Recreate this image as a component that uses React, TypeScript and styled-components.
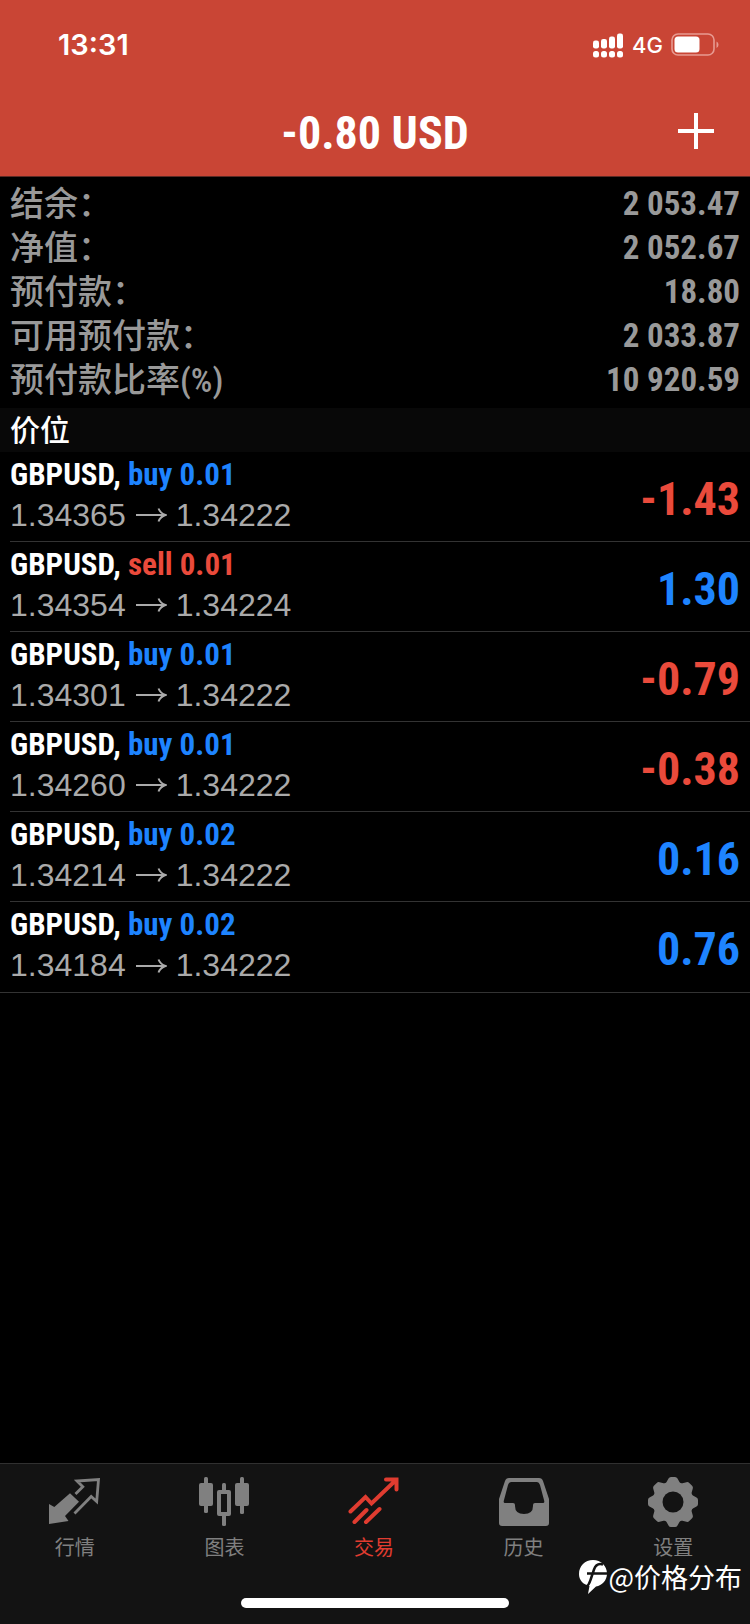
import React from 'react';
import styled, { createGlobalStyle } from 'styled-components';

const RED = '#ea4a3b';
const BLUE = '#1e84ff';
const sans = `"Liberation Sans", "Noto Sans CJK SC", sans-serif`;
const narrow = `"Roboto Condensed", "Noto Sans CJK SC", sans-serif`;

const GlobalStyle = createGlobalStyle`
  * { box-sizing: border-box; }
  body { margin: 0; background: #000; font-family: ${sans}; }
  h1, h2, p, dl, dt, dd, ul { margin: 0; padding: 0; }
  ul { list-style: none; }
`;

const Screen = styled.div`
  display: flex;
  flex-direction: column;
  min-height: 100vh;
  background: #000;
  color: #fff;
`;

const Header = styled.header`
  background: #c94535;
  border-bottom: 1px solid #5c2a24;
`;

const StatusBar = styled.div`
  display: flex;
  align-items: center;
  justify-content: space-between;
  height: 90px;
  padding: 0 31px 0 58px;
`;

const Clock = styled.time`
  font: 600 29px/32px Inter, sans-serif;
`;

const StatusIcons = styled.div`
  display: flex;
  align-items: center;
  gap: 8px;
`;

const Network = styled.span`
  font: 500 22px/28px Inter, sans-serif;
`;

const TitleBar = styled.div`
  display: grid;
  grid-template-columns: 1fr auto 1fr;
  align-items: center;
  height: 86px;
  padding: 0 24px 4px;
`;

const Title = styled.h1`
  grid-column: 2;
  padding-top: 4px;
  font: 700 46px/56px ${narrow};
`;

const AddButton = styled.button`
  display: grid;
  place-items: center;
  justify-self: end;
  width: 60px;
  height: 60px;
  padding: 0;
  border: 0;
  background: none;
  color: #fff;
`;

const Summary = styled.dl`
  padding: 5px 10px 6px;
  color: #999;
`;

const SummaryRow = styled.div`
  display: flex;
  align-items: center;
  justify-content: space-between;
  height: 44px;
`;

const SummaryLabel = styled.dt`
  font: 500 34px/44px ${narrow};
`;

const SummaryValue = styled.dd`
  font: 700 33px/44px ${narrow};
`;

const SectionTitle = styled.h2`
  height: 44px;
  padding: 0 10px;
  background: #080808;
  font: 500 30px/46px ${narrow};
`;

const PositionRow = styled.li`
  display: flex;
  align-items: center;
  justify-content: space-between;
  height: 90px;
  margin-left: 10px;
  padding-right: 10px;
  border-bottom: 1px solid #333;

  &:last-child {
    height: 91px;
    margin-left: 0;
    padding-left: 10px;
  }
`;

const OrderInfo = styled.div`
  padding-bottom: 3px;
`;

const Order = styled.p`
  font: 700 31px/40px ${narrow};
`;

const Side = styled.span<{ $color: string }>`
  color: ${(p) => p.$color};
`;

const Prices = styled.p`
  display: flex;
  align-items: center;
  gap: 9px;
  color: #aaa;
  font: 400 32px/41px ${sans};
`;

const Profit = styled.strong<{ $color: string }>`
  padding-top: 4px;
  color: ${(p) => p.$color};
  font: 700 46px/56px ${narrow};
`;

const Footer = styled.footer`
  position: relative;
  margin-top: auto;
  height: 161px;
  border-top: 1px solid #303030;
  background: #131313;
`;

const Tabs = styled.nav`
  display: grid;
  grid-template-columns: repeat(5, 1fr);
  padding-right: 2px;
`;

const Tab = styled.a<{ $active?: boolean }>`
  display: flex;
  flex-direction: column;
  align-items: center;
  gap: 3px;
  padding-top: 12px;
  color: ${(p) => (p.$active ? '#e03c30' : '#808080')};
  font: 400 20px/32px "Noto Sans CJK SC", sans-serif;
  text-decoration: none;
`;

const HomeIndicator = styled.div`
  position: absolute;
  bottom: 16px;
  left: 50%;
  width: 268px;
  height: 10px;
  border-radius: 5px;
  background: #fff;
  transform: translateX(-50%);
`;

const Watermark = styled.div`
  position: absolute;
  right: 8px;
  bottom: 27px;
  display: flex;
  align-items: center;
  font: 400 27px/40px "Noto Sans CJK SC", sans-serif;
`;

const Signal = () => (
  <svg width="31" height="25" viewBox="0 0 31 25" fill="#fff" aria-hidden="true">
    {[0, 1, 2, 3].map((i) => (
      <g key={i}>
        <rect x={i * 8} y={[7.5, 6, 3.5, 0.5][i]} width="6" height={[8, 9.5, 12, 15][i]} rx="2.2" />
        <rect x={i * 8} y="18" width="6" height="6.5" rx="2.5" />
      </g>
    ))}
  </svg>
);

const Battery = () => (
  <svg width="48" height="24" viewBox="0 0 48 24" fill="none" aria-hidden="true">
    <rect x="1" y="1" width="42" height="21" rx="6" stroke="#e79a91" strokeWidth="1.6" />
    <rect x="3.5" y="3.5" width="25" height="16" rx="3.5" fill="#fff" />
    <path d="M45.5 8.5v6.5q2-1 2-3.2t-2-3.3z" fill="#e79a91" />
  </svg>
);

const Plus = () => (
  <svg width="36" height="36" viewBox="0 0 36 36" stroke="#fff" strokeWidth="4" aria-hidden="true">
    <path d="M0 18h36M18 0v36" />
  </svg>
);

const Arrow = () => (
  <svg width="32" height="16" viewBox="0 0 32 16" fill="none" stroke="#aaa" strokeWidth="2" role="img" aria-label="to">
    <path d="M1 8h29M23.500 1.500q2 5 7 6.500q-5 1.500-7 6.500" />
  </svg>
);

const QuotesIcon = () => (
  <svg width="52" height="52" viewBox="0 0 52 52" aria-hidden="true">
    <path d="M0 28l5.300 3L21 17.300l9 8.500L16 40l3.500 5L0 48z" fill="currentColor" />
    <path d="M26.500 18l7.300-7.300L28 5l21.500-1.500L47.700 25.500l-5.500-5L25.500 37.500" fill="none" stroke="currentColor" strokeWidth="2.800" />
  </svg>
);

const ChartIcon = () => (
  <svg width="52" height="52" viewBox="0 0 52 52" fill="currentColor" aria-hidden="true">
    <rect x="6" y="1" width="4" height="36" rx="1.500" />
    <rect x="1" y="7" width="14" height="23" rx="2" />
    <rect x="42" y="1" width="4" height="37" rx="1.500" />
    <rect x="37" y="7" width="14" height="23" rx="2" />
    <rect x="24" y="7" width="4" height="8" rx="1.500" />
    <rect x="24" y="38" width="4" height="12" rx="1.500" />
    <path fillRule="evenodd" d="M21 14h10q2 0 2 2v22q0 2-2 2H21q-2 0-2-2V16q0-2 2-2zm2 4v18h6V18z" />
  </svg>
);

const TradeIcon = () => (
  <svg width="52" height="52" viewBox="0 0 52 52" fill="none" stroke="currentColor" strokeWidth="4" strokeLinecap="round" aria-hidden="true">
    <path d="M2.500 35.500L17.500 21l6 6.500L48 4M38 3.500h10.500v10M6.500 46L18.500 34M18 46L31.500 33" />
  </svg>
);

const HistoryIcon = () => (
  <svg width="52" height="52" viewBox="0 0 52 52" fill="currentColor" aria-hidden="true">
    <path fillRule="evenodd" d="M11 2h30q3 0 4 3l6 18v24q0 3-3 3H4q-3 0-3-3V23L7 5q1-3 4-3zm2 4q-2 0-3 3L6 24q-1 3 1 3h8q2 0 2 2v1q0 8 9 8t9-8v-1q0-2 2-2h8q2 0 1-3L42 9q-1-3-3-3z" />
  </svg>
);

const SettingsIcon = () => (
  <svg width="52" height="52" viewBox="0 0 52 52" aria-hidden="true">
    <g fill="currentColor">
      {[0, 45, 90, 135].map((a) => (
        <path key={a} transform={`rotate(${a} 26 26)`} d="M19 7l2.500-4.500q.8-1.500 2.500-1.500h4q1.700 0 2.500 1.500L33 7v38l-2.500 4.500q-.8 1.500-2.500 1.500h-4q-1.700 0-2.500-1.500L19 45z" />
      ))}
      <circle cx="26" cy="26" r="20.500" />
    </g>
    <circle cx="26" cy="26" r="10.500" fill="#131313" />
  </svg>
);

const BrandMark = () => (
  <svg width="29" height="34" viewBox="0 0 29 34" aria-hidden="true">
    <path d="M14 0C22 0 28 6 28 13.500c0 7-5 12-11 13L9 34l1.500-8C4 24.500 0 20 0 14 0 6 6 0 14 0z" fill="#fff" />
    <path d="M24 4.500q-6.500-2-9 5L11.500 20q-1.500 5-4.500 7M8 13.500h20" fill="none" stroke="#131313" strokeWidth="2.500" />
  </svg>
);

const summary = [
  ['结余：', '2 053.47'],
  ['净值：', '2 052.67'],
  ['预付款：', '18.80'],
  ['可用预付款：', '2 033.87'],
  ['预付款比率(%)', '10 920.59'],
];

const positions = [
  { side: 'buy', lots: '0.01', open: '1.34365', now: '1.34222', profit: '-1.43' },
  { side: 'sell', lots: '0.01', open: '1.34354', now: '1.34224', profit: '1.30' },
  { side: 'buy', lots: '0.01', open: '1.34301', now: '1.34222', profit: '-0.79' },
  { side: 'buy', lots: '0.01', open: '1.34260', now: '1.34222', profit: '-0.38' },
  { side: 'buy', lots: '0.02', open: '1.34214', now: '1.34222', profit: '0.16' },
  { side: 'buy', lots: '0.02', open: '1.34184', now: '1.34222', profit: '0.76' },
];

const tabs = [
  { label: '行情', Icon: QuotesIcon },
  { label: '图表', Icon: ChartIcon },
  { label: '交易', Icon: TradeIcon, active: true },
  { label: '历史', Icon: HistoryIcon },
  { label: '设置', Icon: SettingsIcon },
];

export default function App() {
  return (
    <Screen>
      <GlobalStyle />
      <Header>
        <StatusBar>
          <Clock>13:31</Clock>
          <StatusIcons>
            <Signal />
            <Network>4G</Network>
            <Battery />
          </StatusIcons>
        </StatusBar>
        <TitleBar>
          <Title>-0.80 USD</Title>
          <AddButton type="button" aria-label="新订单"><Plus /></AddButton>
        </TitleBar>
      </Header>
      <main>
        <Summary>
          {summary.map(([label, value]) => (
            <SummaryRow key={label}>
              <SummaryLabel>{label}</SummaryLabel>
              <SummaryValue>{value}</SummaryValue>
            </SummaryRow>
          ))}
        </Summary>
        <SectionTitle>价位</SectionTitle>
        <ul>
          {positions.map((p) => (
            <PositionRow key={p.open}>
              <OrderInfo>
                <Order>GBPUSD, <Side $color={p.side === 'buy' ? BLUE : RED}>{p.side} {p.lots}</Side></Order>
                <Prices>{p.open}<Arrow />{p.now}</Prices>
              </OrderInfo>
              <Profit $color={p.profit.startsWith('-') ? RED : BLUE}>{p.profit}</Profit>
            </PositionRow>
          ))}
        </ul>
      </main>
      <Footer>
        <Tabs>
          {tabs.map(({ label, Icon, active }) => (
            <Tab key={label} href="#" $active={active} aria-current={active ? 'page' : undefined}>
              <Icon />
              {label}
            </Tab>
          ))}
        </Tabs>
        <Watermark><BrandMark />@价格分布</Watermark>
        <HomeIndicator />
      </Footer>
    </Screen>
  );
}
